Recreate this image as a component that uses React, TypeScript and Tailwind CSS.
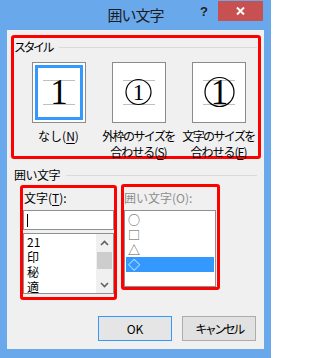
import React from 'react';

type StyleKind = 'none' | 'outer' | 'inner';

function StylePreview({ kind }: { kind: StyleKind }) {
    return (
        <svg width="52" height="59" viewBox="0 0 52 59">
            <line x1="10" y1="17.5" x2="42" y2="17.5" stroke="#c0c0c0" />
            <line x1="10" y1="41.5" x2="42" y2="41.5" stroke="#c0c0c0" />
            {kind === 'outer' && <circle cx="25.5" cy="29" r="12.5" fill="none" stroke="#000" strokeWidth="1.2" />}
            {kind === 'inner' && <circle cx="26.5" cy="29" r="14.5" fill="none" stroke="#000" strokeWidth="1.2" />}
            {kind === 'outer' ? (
                <text x="25.5" y="37" textAnchor="middle" fontSize="23" fontFamily="'Liberation Serif', serif" fill="#000">1</text>
            ) : (
                <text x={kind === 'inner' ? 26.5 : 26} y="41" textAnchor="middle" fontSize="35" fontFamily="'Liberation Serif', serif" fill="#000">1</text>
            )}
        </svg>
    );
}

function Chevron({ up }: { up?: boolean }) {
    return (
        <svg width="9" height="6" viewBox="0 0 9 6">
            <path d={up ? 'M1 5 L4.5 1.5 L8 5' : 'M1 1 L4.5 4.5 L8 1'} fill="none" stroke="#606060" strokeWidth="1.6" />
        </svg>
    );
}

const styles: { kind: StyleKind; lines: React.ReactNode[] }[] = [
    { kind: 'none', lines: [<>なし(<span className="underline underline-offset-2">N</span>)</>] },
    {
        kind: 'outer',
        lines: [
            <span className="tracking-[-1.6px]">外枠のサイズを</span>,
            <span className="tracking-[-1px]">合わせる(<span className="underline underline-offset-2">S</span>)</span>,
        ],
    },
    {
        kind: 'inner',
        lines: [
            <span className="tracking-[-1.6px]">文字のサイズを</span>,
            <span className="tracking-[-1px]">合わせる(<span className="underline underline-offset-2">E</span>)</span>,
        ],
    },
];

const chars = ['21', '印', '秘', '適'];
const shapes = ['○', '□', '△', '◇'];

export default function App() {
    return (
        <div className="w-[271px] h-[358px] bg-[#6aa8ec] flex flex-col font-['Noto_Sans_CJK_JP',sans-serif] text-[12px] text-black">
            {/* title bar */}
            <div className="h-[30px] grid grid-cols-[1fr_auto_1fr]">
                <div />
                <div className="flex items-center text-[15px] tracking-[-1px] text-[#1b1b1b]">囲い文字</div>
                <div className="flex justify-end items-start pt-[1px] pr-[8px]">
                    <span className="font-['Liberation_Sans',sans-serif] font-bold text-[13px] leading-[13px] mt-[4px] mr-[10px] text-[#222]">?</span>
                    <div className="w-[45px] h-[20px] bg-[#c75050] flex items-center justify-center">
                        <svg width="9" height="8" viewBox="0 0 9 8">
                            <path d="M1 0.5 L8 7.5 M8 0.5 L1 7.5" stroke="#fff" strokeWidth="2" />
                        </svg>
                    </div>
                </div>
            </div>

            {/* client area */}
            <div className="ml-[7px] w-[257px] h-[319px] bg-[#f0f0f0] flex flex-col">
                <div className="ml-[4px] mt-[5px] w-[250px] h-[124px] border-[3px] border-[#ff0000] rounded-[3px]">
                    <div className="mt-[2px] h-[14px] flex items-center">
                        <span className="leading-[14px] tracking-[-2.5px]">スタイル</span>
                        <div className="flex-1 ml-[7px] mr-[1px] h-px bg-[#dadada]" />
                    </div>
                    <div className="mt-[8px] ml-[5px] flex gap-[1px]">
                        {styles.map((s) => (
                            <div key={s.kind} className="w-[80px] flex flex-col items-center">
                                <div
                                    className={
                                        s.kind === 'none'
                                            ? 'w-[54px] h-[61px] border border-[#8b8b8b] bg-white shadow-[inset_0_0_0_2px_#fff,inset_0_0_0_5px_#3399ff]'
                                            : 'w-[54px] h-[61px] border border-[#8b8b8b] bg-white'
                                    }
                                >
                                    <StylePreview kind={s.kind} />
                                </div>
                                <div className="mt-[5px] leading-[16px] text-center whitespace-nowrap">
                                    {s.lines.map((l, i) => (
                                        <div key={i}>{l}</div>
                                    ))}
                                </div>
                            </div>
                        ))}
                    </div>
                </div>

                <div className="mt-[9px] ml-[7px] mr-[7px] h-[14px] flex items-center">
                    <span className="leading-[14px] tracking-[-0.5px]">囲い文字</span>
                    <div className="flex-1 ml-[6px] h-px bg-[#dadada]" />
                </div>

                <div className="mt-[2px] ml-[13px] flex items-start gap-[4px]">
                    <div className="mt-[1px] w-[97px] h-[115px] border-[3px] border-[#ff0000] rounded-[3px] flex flex-col">
                        <div className="mt-[2px] pl-[1px] leading-[16px]">
                            文字(<span className="underline underline-offset-2">T</span>):
                        </div>
                        <div className="mt-[4px] h-[20px] border border-[#8f9091] bg-white flex items-center pl-[3px]">
                            <div className="w-px h-[13px] bg-black" />
                        </div>
                        <div className="mt-[3px] h-[61px] border border-[#8f9091] bg-white flex">
                            <div className="flex-1 pl-[3px]">
                                {chars.map((c) => (
                                    <div key={c} className="h-[15px] leading-[15px]">{c}</div>
                                ))}
                            </div>
                            <div className="w-[17px] bg-[#f0f0f0] flex flex-col">
                                <div className="h-[17px] flex items-center justify-center">
                                    <Chevron up />
                                </div>
                                <div className="flex-1">
                                    <div className="mt-[1px] mx-[1px] h-[17px] bg-[#cdcdcd]" />
                                </div>
                                <div className="h-[17px] flex items-center justify-center">
                                    <Chevron />
                                </div>
                            </div>
                        </div>
                    </div>

                    <div className="w-[99px] h-[106px] border-[3px] border-[#ff0000] rounded-[3px] flex flex-col">
                        <div className="mt-[3px] leading-[16px] text-[#8d8d8d]">囲い文字(O):</div>
                        <div className="mt-[4px] w-[92px] h-[77px] border border-[#8f9091] bg-white pt-px">
                            {shapes.map((s, i) => (
                                <div
                                    key={s}
                                    className={
                                        i === 3
                                            ? 'mx-px h-[15px] leading-[15px] pl-[2px] bg-[#3399ff] text-white'
                                            : 'mx-px h-[15px] leading-[15px] pl-[2px] text-[#555]'
                                    }
                                >
                                    {s}
                                </div>
                            ))}
                        </div>
                    </div>
                </div>

                <div className="mt-[16px] mr-[8px] flex justify-end gap-[10px]">
                    <div className="w-[74px] h-[25px] border border-[#3399ff] bg-[#e5e5e5] flex items-center justify-center">OK</div>
                    <div className="w-[74px] h-[25px] border border-[#adadad] bg-[#e1e1e1] flex items-center justify-center tracking-[-2.5px]">キャンセル</div>
                </div>
            </div>
        </div>
    );
}
